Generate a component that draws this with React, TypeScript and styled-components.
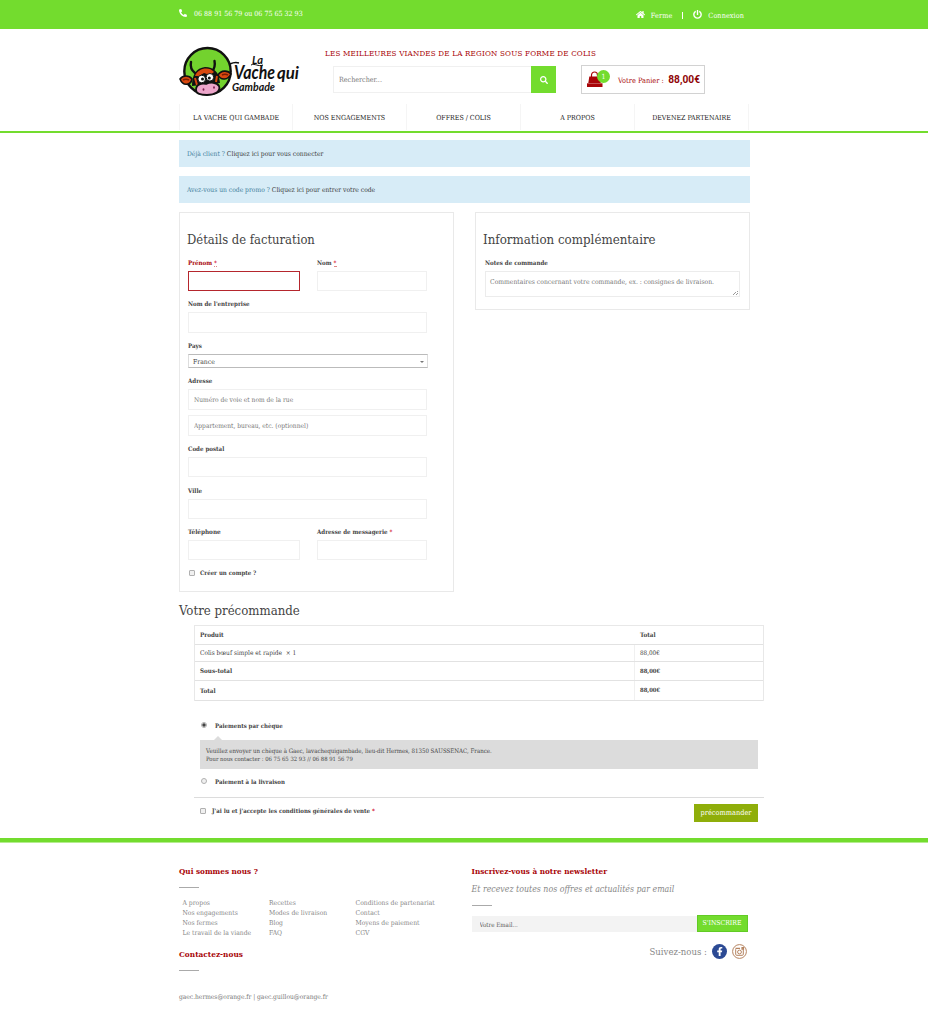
import React from "react";
import styled, { createGlobalStyle } from "styled-components";
import { FaPhoneAlt, FaHome, FaPowerOff, FaSearch, FaFacebookF } from "react-icons/fa";

const GREEN = "#73dc2e";
const RED = "#a80508";
const LINE = "#e9e9e9";

const GlobalStyle = createGlobalStyle`
  * { box-sizing: border-box; }
  body {
    margin: 0;
    background: #fff;
    color: #444;
    font: 400 6.6px/10px "Roboto Slab", "DejaVu Serif Condensed", "DejaVu Serif", serif;
  }
  input, select, textarea, button { font: inherit; color: inherit; }
  h2, h3, p, ul { margin: 0; padding: 0; font-weight: 400; }
  ul { list-style: none; }
  a { color: inherit; text-decoration: none; }
`;

const Page = styled.div`
  height: 1025px;
  overflow: hidden;
`;

const Container = styled.div`
  width: 571px;
  margin-left: 179px;
`;

/* Top bar */
const TopBar = styled.div`
  height: 29px;
  background: ${GREEN};
  color: #fff;
`;
const TopBarInner = styled(Container)`
  display: flex;
  justify-content: space-between;
  height: 29px;
  font-size: 7.05px;
`;
const Phone = styled.div`
  display: flex;
  align-items: center;
  gap: 7px;
  height: 28px;
  svg { font-size: 8px; margin-top: -3px; }
`;
const Account = styled.div`
  display: flex;
  align-items: center;
  height: 31px;
  margin-right: 6px;
  font-size: 7.2px;
  svg { font-size: 9px; margin-right: 6px; margin-top: -3px; }
  i { width: 1px; height: 7px; background: #fff; margin: 0 10px; }
`;
const AccountLink = styled.a`
  display: flex;
  align-items: center;
  letter-spacing: 0.1px;
`;

/* Header */
const Header = styled(Container)`
  display: flex;
  height: 75px;
`;
const LogoLink = styled.a`
  display: block;
  width: 146px;
  padding-top: 16px;
  svg { display: block; }
`;
const Middle = styled.div`
  width: 256px;
  padding-top: 19px;
`;
const Slogan = styled.p`
  color: ${RED};
  font-size: 8px;
  letter-spacing: 0.178px;
  line-height: 12px;
  white-space: nowrap;
`;
const SearchForm = styled.form`
  display: flex;
  height: 27px;
  margin: 6px 25px 0 8px;
  width: 223px;
`;
const SearchInput = styled.input`
  width: 198px;
  border: 1px solid #f0f0f0;
  border-right: 0;
  padding: 0 5px;
  font-size: 7.1px;
  outline: none;
  &::placeholder { color: #777; opacity: 1; }
`;
const SearchButton = styled.button`
  width: 25px;
  border: 0;
  padding: 0;
  background: ${GREEN};
  color: #fff;
  display: flex;
  align-items: center;
  justify-content: center;
  font-size: 8px;
`;
const Cart = styled.a`
  display: flex;
  align-items: center;
  height: 29px;
  width: 124px;
  margin-top: 36px;
  border: 1px solid #d2d2d2;
  padding: 3px 4px 0 5px;
  color: ${RED};
  font-size: 7.35px;
  white-space: nowrap;
  strong {
    margin-left: auto;
    font: 700 10.2px/12px Roboto, sans-serif;
    margin-top: -2px;
    color: #8f0508;
  }
`;
const BagWrap = styled.span`
  position: relative;
  display: block;
  width: 31px;
  height: 20px;
  svg { position: absolute; left: 0; top: 0; }
`;
const Badge = styled.span`
  position: absolute;
  left: 10px;
  top: -1px;
  width: 13px;
  height: 13px;
  border-radius: 50%;
  background: ${GREEN};
  color: #fff;
  text-align: center;
  line-height: 14px;
  font-size: 7px;
`;

/* Navigation */
const Nav = styled.nav`
  height: 29px;
  border-bottom: 2px solid ${GREEN};
`;
const NavList = styled(Container)`
  display: grid;
  grid-template: 26px / 113px repeat(4, 114px);
  height: 26px;
  border-left: 1px solid #f5f5f5;
`;
const NavLink = styled.a`
  border-right: 1px solid #f5f5f5;
  text-align: center;
  font-size: 7px;
  line-height: 29px;
  height: 26px;
  color: #222;
`;

/* Checkout */
const Notice = styled.div<{ $top: number }>`
  height: 27px;
  margin-top: ${(p) => p.$top}px;
  padding-left: 8px;
  background: #d7ecf7;
  color: #3f7f9b;
  font-size: 6.7px;
  line-height: 28px;
  a { color: #3c3c3c; }
`;
const Panels = styled.div`
  display: flex;
  justify-content: space-between;
  align-items: flex-start;
  margin-top: 9px;
`;
const Panel = styled.section<{ $w: number; $h: number }>`
  width: ${(p) => p.$w}px;
  height: ${(p) => p.$h}px;
  border: 1px solid ${LINE};
  padding: 19px 8px 0;
`;
const Title = styled.h2<{ $size?: number }>`
  font-size: ${(p) => p.$size ?? 13}px;
  line-height: 16px;
  margin-left: -1px;
  color: #444;
`;
const Fields = styled.div`
  width: 239px;
`;
const FieldRow = styled.div`
  display: grid;
  grid-template-columns: 112px 110px;
  gap: 17px;
`;
const Field = styled.div<{ $top?: number; $left?: number }>`
  display: flex;
  flex-direction: column;
  margin: ${(p) => p.$top ?? 7}px 0 0 ${(p) => p.$left ?? 0}px;
`;
const Label = styled.label<{ $error?: boolean; $size?: number }>`
  height: 10px;
  margin-bottom: 4px;
  font-weight: 700;
  font-size: ${(p) => p.$size ?? 6.15}px;
  line-height: 11px;
  color: ${(p) => (p.$error ? RED : "#444")};
`;
const Required = styled.span`
  color: #d0021b;
  border-bottom: 1px dotted #d88;
  line-height: 7px;
  display: inline-block;
`;
const PlainRequired = styled.span`
  color: #d0021b;
`;
const TextInput = styled.input<{ $h?: number; $error?: boolean }>`
  width: 100%;
  height: ${(p) => p.$h ?? 20}px;
  border: 1px solid ${(p) => (p.$error ? "#b5262d" : "#f0f0f0")};
  background: #fff;
  padding: 0 5px;
  outline: none;
  & + & { margin-top: 5px; }
  &::placeholder { color: #777; opacity: 1; }
`;
const CountrySelect = styled.div`
  display: flex;
  justify-content: space-between;
  align-items: center;
  width: 240px;
  height: 14px;
  border: 1px solid #ddd;
  border-top-color: #bbb;
  border-bottom-color: #bbb;
  padding: 1px 3px 0 4px;
  font-size: 6.8px;
  &::after {
    content: "";
    border: 2px solid transparent;
    border-top: 2.5px solid #777;
    border-bottom: 0;
  }
`;
const Notes = styled.textarea`
  width: 255px;
  height: 26px;
  border: 1px solid #ececec;
  padding: 5px 4px;
  font-size: 6.75px;
  line-height: 10px;
  resize: none;
  outline: none;
  overflow: hidden;
  background: linear-gradient(135deg, transparent 50%, #999 50%, #999 60%, transparent 60%, transparent 72%, #999 72%, #999 84%, transparent 84%) no-repeat right 1px bottom 1px / 5px 5px;
  &::placeholder { color: #777; opacity: 1; }
`;
const CheckLine = styled.label<{ $gap: number }>`
  display: flex;
  align-items: center;
  gap: ${(p) => p.$gap}px;
  height: 10px;
  font-weight: 700;
  font-size: 6.05px;
`;
const Tick = styled.input`
  appearance: none;
  width: 6px;
  height: 6px;
  margin: 0;
  border: 1px solid #b0b0b0;
  border-radius: ${(p) => (p.type === "radio" ? "50%" : "1px")};
  background: ${(p) =>
    p.defaultChecked ? "radial-gradient(circle, #444 0 1.4px, #eee 1.9px)" : "#f0f0f0"};
  ${(p) => p.type === "radio" && "margin: -2px 0 0 1px;"}
`;
const AccountLine = styled(CheckLine)`
  margin-top: 8px;
  padding-left: 1px;
`;

const OrderTitle = styled(Title)`
  margin: 11px 0 0 0;
`;
const Order = styled.div`
  width: 570px;
  margin: 6px 0 0 15px;
`;
const OrderTable = styled.div`
  border: 1px solid #e8e8e8;
  border-bottom: 0;
`;
const OrderRow = styled.div<{ $h: number; $bold?: boolean; $head?: boolean }>`
  display: grid;
  grid-template-columns: 439px 1fr;
  height: ${(p) => p.$h}px;
  border-bottom: 1px solid #e2e2e2;
  font-weight: ${(p) => (p.$bold ? 700 : 400)};
  font-size: ${(p) => (p.$bold ? 6.25 : 6.5)}px;
  line-height: ${(p) => p.$h - 1}px;
  span { padding-left: 5px; }
  span + span { border-left: 1px solid ${(p) => (p.$head ? "transparent" : "#f0f0f0")}; }
`;
const Price = styled.span<{ $bold?: boolean }>`
  font-size: ${(p) => (p.$bold ? 5.85 : 6.3)}px;
`;
const Payment = styled.div`
  height: 97px;
  padding: 20px 6px 0;
  border-bottom: 1px solid #dcdcdc;
`;
const PaymentBox = styled.div`
  position: relative;
  height: 29px;
  margin: 9px 0 8px;
  padding: 6px;
  background: #dcdcdc;
  color: #444;
  font-size: 6.08px;
  line-height: 9px;
  &::before {
    content: "";
    position: absolute;
    left: 14px;
    top: -4px;
    border: 4px solid transparent;
    border-top: 0;
    border-bottom-color: #dcdcdc;
  }
`;
const ContactLine = styled.p`
  font-size: 5.88px;
`;
const SubmitRow = styled.div`
  display: flex;
  justify-content: space-between;
  align-items: flex-start;
  padding: 6px 6px 0;
  height: 40px;
  ${CheckLine} { margin-top: 2px; }
`;
const SubmitButton = styled.button`
  width: 64px;
  height: 18px;
  border: 0;
  padding: 0;
  background: #8fae0a;
  color: #fff;
  font-size: 7.35px;
`;

/* Footer */
const Footer = styled.footer`
  border-top: 4px solid ${GREEN};
  box-shadow: inset 0 1px 0 #b5ec8f;
`;
const FooterInner = styled(Container)`
  display: grid;
  grid-template-columns: 292.5px 276.5px;
  padding-top: 23px;
`;
const FooterTitle = styled.h3<{ $size?: number; $top?: number }>`
  font-weight: 700;
  font-size: ${(p) => p.$size ?? 8.1}px;
  line-height: 12px;
  margin-top: ${(p) => p.$top ?? 0}px;
  color: ${RED};
`;
const Rule = styled.div<{ $top: number }>`
  width: 20px;
  height: 1px;
  margin-top: ${(p) => p.$top}px;
  background: #aaa;
`;
const LinkColumns = styled.div`
  display: grid;
  grid-template-columns: 86.5px 86.5px 100px;
  margin: 10px 0 0 3.5px;
  color: #888;
  font-size: 6.75px;
  line-height: 10px;
  white-space: nowrap;
`;
const Emails = styled.p`
  margin-top: 20px;
  color: #777;
  font-size: 6.6px;
  line-height: 12px;
`;
const Tagline = styled.p`
  margin-top: 6px;
  color: #888;
  font-size: 8.74px;
  font-style: italic;
  line-height: 12px;
  white-space: nowrap;
`;
const Newsletter = styled.form`
  display: flex;
  align-items: flex-end;
  margin-top: 9px;
`;
const EmailInput = styled.input`
  width: 225px;
  height: 16px;
  border: 0;
  padding: 1px 8px 0;
  background: #f3f3f3;
  font-size: 6.2px;
  &::placeholder { color: #555; opacity: 1; }
`;
const SubscribeButton = styled.button`
  width: 51px;
  height: 17px;
  border: 1px solid #62cb25;
  padding: 0 0 1px;
  background: ${GREEN};
  color: #fff;
  font-size: 6.87px;
`;
const Social = styled.div`
  display: flex;
  align-items: center;
  justify-content: flex-end;
  gap: 5px;
  margin: 12px 1px 0 0;
  color: #888;
  font-size: 9.5px;
  line-height: 15px;
`;
const FacebookDot = styled.a`
  display: flex;
  align-items: center;
  justify-content: center;
  width: 15px;
  height: 15px;
  border-radius: 50%;
  background: #2c4a94;
  color: #fff;
`;
const InstagramDot = styled.a`
  display: flex;
  width: 15px;
  height: 15px;
`;

const Logo = () => (
  <svg width="122" height="54" viewBox="0 0 122 54">
    <circle cx="28.5" cy="26.2" r="23.2" fill="#73d22e" stroke="#111" strokeWidth="2.4" />
    <path d="M12 17c-1 5 0 8 4 11M35.500 16c1 5 0 8-3 11" fill="none" stroke="#111" strokeWidth="2.4" strokeLinecap="round" />
    <path d="M13 41c0-11 4-18 13-19 9 0 14 5 15 16z" fill="#111" />
    <path d="M16 31c3-8 14-10 19-4l-4 3-6-2-5 3z" fill="#d9480f" />
    <path d="M16 33l2 7M38 31l-1 6" stroke="#d9480f" strokeWidth="2" />
    <path d="M1 34c3-4 9-4 12 0-1 6-9 8-12 0z" fill="#d9480f" stroke="#111" strokeWidth="1.6" />
    <path d="M39 30c3-5 10-5 13-1-3 6-10 7-13 1z" fill="#d9480f" stroke="#111" strokeWidth="1.6" />
    <path d="M4 35c2-1 4-1 6 0M43 30c2-1 4-1 6 0" stroke="#7c1d05" strokeWidth="1.4" fill="none" />
    <path d="M17 45c0-6 6-7 10-6 4-2 11-2 13 2 2 5-4 9-12 9-7 0-11-2-11-5z" fill="#eda6cb" stroke="#111" strokeWidth="1.8" />
    <circle cx="22.700" cy="34" r="3.800" fill="#fff" stroke="#111" />
    <circle cx="30.900" cy="32.300" r="3.800" fill="#fff" stroke="#111" />
    <circle cx="23.500" cy="34" r="1.500" fill="#111" />
    <circle cx="30.300" cy="33" r="1.500" fill="#111" />
    <ellipse cx="24.500" cy="44.500" rx="0.900" ry="1.300" fill="#7b2350" />
    <ellipse cx="35" cy="42.500" rx="0.900" ry="1.300" fill="#7b2350" />
    <path d="M51 19c3-1.500 6-2 9-1" fill="none" stroke="#111" strokeWidth="1.500" />
    <path d="M72 20c4-2 7 2 12 0" fill="none" stroke="#111" />
    <g fill="#111" fontFamily="Lato, sans-serif" fontStyle="italic">
      <text x="73" y="18.500" fontSize="12" fontWeight="700" textLength="11" lengthAdjust="spacingAndGlyphs">La</text>
      <text x="55" y="34" fontSize="18" fontWeight="700" textLength="41" lengthAdjust="spacingAndGlyphs">Vache</text>
      <text x="98" y="34" fontSize="17" fontWeight="700" textLength="22" lengthAdjust="spacingAndGlyphs">qui</text>
      <text x="53" y="46" fontSize="12" fontWeight="700" textLength="43" lengthAdjust="spacingAndGlyphs">Gambade</text>
    </g>
  </svg>
);

const Bag = () => (
  <svg width="16" height="17" viewBox="0 0 16 17">
    <path d="M4.500 6V4a3 3 0 0 1 6 0v2" fill="none" stroke={RED} strokeWidth="1.200" />
    <path d="M2.300 5.500h10.500l1 6.500H1.300z" fill={RED} />
    <path d="M0 12.300h15.500V16H0z" fill={RED} />
  </svg>
);

const InstagramIcon = () => (
  <svg width="15" height="15" viewBox="0 0 15 15" fill="none" stroke="#b5835f">
    <circle cx="7.500" cy="7.500" r="6.900" />
    <path d="M3.700 5.200V10.300a1 1 0 0 0 1 1h5.600a1 1 0 0 0 1-1V5.200" />
    <path d="M3.500 4.300h4.500M10 3.700h1.500v1.500H10z" strokeWidth="1.200" />
    <circle cx="7.500" cy="8" r="1.900" />
  </svg>
);

const navItems = ["LA VACHE QUI GAMBADE", "NOS ENGAGEMENTS", "OFFRES / COLIS", "A PROPOS", "DEVENEZ PARTENAIRE"];
const footerLinks = [
  ["A propos", "Nos engagements", "Nos fermes", "Le travail de la viande"],
  ["Recettes", "Modes de livraison", "Blog", "FAQ"],
  ["Conditions de partenariat", "Contact", "Moyens de paiement", "CGV"],
];

export default function App() {
  return (
    <Page>
      <GlobalStyle />
      <TopBar>
        <TopBarInner>
          <Phone><FaPhoneAlt />06 88 91 56 79 ou 06 75 65 32 93</Phone>
          <Account>
            <AccountLink><FaHome />Ferme</AccountLink>
            <i />
            <AccountLink><FaPowerOff />Connexion</AccountLink>
          </Account>
        </TopBarInner>
      </TopBar>

      <Header>
        <LogoLink><Logo /></LogoLink>
        <Middle>
          <Slogan>LES MEILLEURES VIANDES DE LA REGION SOUS FORME DE COLIS</Slogan>
          <SearchForm>
            <SearchInput placeholder="Rechercher..." />
            <SearchButton type="button"><FaSearch /></SearchButton>
          </SearchForm>
        </Middle>
        <Cart>
          <BagWrap><Bag /><Badge>1</Badge></BagWrap>
          Votre Panier :
          <strong>88,00€</strong>
        </Cart>
      </Header>

      <Nav>
        <NavList>
          {navItems.map((item) => <NavLink key={item}>{item}</NavLink>)}
        </NavList>
      </Nav>

      <Container as="main">
        <Notice $top={7}>Déjà client ? <a>Cliquez ici pour vous connecter</a></Notice>
        <Notice $top={9}>Avez-vous un code promo ? <a>Cliquez ici pour entrer votre code</a></Notice>

        <Panels>
          <Panel $w={275} $h={380}>
            <Title $size={12.9}>Détails de facturation</Title>
            <Fields>
              <FieldRow>
                <Field $top={9}>
                  <Label $error>Prénom <Required>*</Required></Label>
                  <TextInput $error />
                </Field>
                <Field $top={9}>
                  <Label>Nom <Required>*</Required></Label>
                  <TextInput />
                </Field>
              </FieldRow>
              <Field><Label>Nom de l'entreprise</Label><TextInput $h={21} /></Field>
              <Field><Label>Pays</Label><CountrySelect>France</CountrySelect></Field>
              <Field>
                <Label>Adresse</Label>
                <TextInput $h={21} placeholder="Numéro de voie et nom de la rue" />
                <TextInput $h={21} placeholder="Appartement, bureau, etc. (optionnel)" />
              </Field>
              <Field><Label>Code postal</Label><TextInput /></Field>
              <Field $top={8}><Label>Ville</Label><TextInput /></Field>
              <FieldRow>
                <Field><Label $size={6.35}>Téléphone</Label><TextInput /></Field>
                <Field><Label>Adresse de messagerie <PlainRequired>*</PlainRequired></Label><TextInput /></Field>
              </FieldRow>
              <AccountLine $gap={5}><Tick type="checkbox" />Créer un compte ?</AccountLine>
            </Fields>
          </Panel>
          <Panel $w={275} $h={98}>
            <Title $size={13.2}>Information complémentaire</Title>
            <Field $top={9} $left={1}>
              <Label>Notes de commande</Label>
              <Notes placeholder="Commentaires concernant votre commande, ex. : consignes de livraison." />
            </Field>
          </Panel>
        </Panels>

        <OrderTitle $size={13.1}>Votre précommande</OrderTitle>
        <Order>
          <OrderTable>
            <OrderRow $h={19} $bold $head><span>Produit</span><span>Total</span></OrderRow>
            <OrderRow $h={17}><span>Colis bœuf simple et rapide &nbsp;× 1</span><Price>88,00€</Price></OrderRow>
            <OrderRow $h={19} $bold><span>Sous-total</span><Price $bold>88,00€</Price></OrderRow>
            <OrderRow $h={20} $bold><span>Total</span><Price $bold>88,00€</Price></OrderRow>
          </OrderTable>
          <Payment>
            <CheckLine $gap={8}><Tick type="radio" name="pay" defaultChecked />Paiements par chèque</CheckLine>
            <PaymentBox>
              <p>Veuillez envoyer un chèque à Gaec, lavachequigambade, lieu-dit Hermes, 81350 SAUSSENAC, France.</p>
              <ContactLine>Pour nous contacter : 06 75 65 32 93 // 06 88 91 56 79</ContactLine>
            </PaymentBox>
            <CheckLine $gap={8}><Tick type="radio" name="pay" />Paiement à la livraison</CheckLine>
          </Payment>
          <SubmitRow>
            <CheckLine $gap={6}>
              <Tick type="checkbox" />
              <span>J'ai lu et j'accepte les conditions générales de vente <PlainRequired>*</PlainRequired></span>
            </CheckLine>
            <SubmitButton type="button">précommander</SubmitButton>
          </SubmitRow>
        </Order>
      </Container>

      <Footer>
        <FooterInner>
          <div>
            <FooterTitle>Qui sommes nous ?</FooterTitle>
            <Rule $top={10} />
            <LinkColumns>
              {footerLinks.map((column) => (
                <ul key={column[0]}>{column.map((link) => <li key={link}><a>{link}</a></li>)}</ul>
              ))}
            </LinkColumns>
            <FooterTitle $top={10} $size={8.2}>Contactez-nous</FooterTitle>
            <Rule $top={10} />
            <Emails>gaec.hermes@orange.fr | gaec.guillou@orange.fr</Emails>
          </div>
          <div>
            <FooterTitle>Inscrivez-vous à notre newsletter</FooterTitle>
            <Tagline>Et recevez toutes nos offres et actualités par email</Tagline>
            <Rule $top={10} />
            <Newsletter>
              <EmailInput placeholder="Votre Email..." />
              <SubscribeButton type="button">S'INSCRIRE</SubscribeButton>
            </Newsletter>
            <Social>
              Suivez-nous :
              <FacebookDot><FaFacebookF /></FacebookDot>
              <InstagramDot><InstagramIcon /></InstagramDot>
            </Social>
          </div>
        </FooterInner>
      </Footer>
    </Page>
  );
}
